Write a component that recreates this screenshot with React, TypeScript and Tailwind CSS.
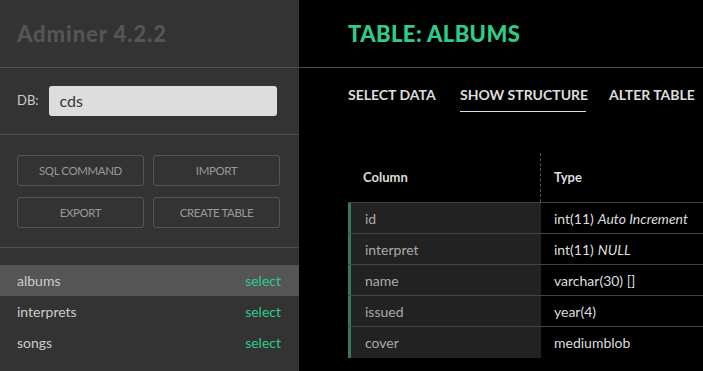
import React from "react";

const font = { fontFamily: "Lato, 'Noto Sans', sans-serif" };

const tables = ["albums", "interprets", "songs"];
const rows: { col: string; type: string; extra?: string }[] = [
  { col: "id", type: "int(11)", extra: "Auto Increment" },
  { col: "interpret", type: "int(11)", extra: "NULL" },
  { col: "name", type: "varchar(30) []" },
  { col: "issued", type: "year(4)" },
  { col: "cover", type: "mediumblob" },
];

export default function App() {
  return (
    <div className="flex h-[371px] w-[703px] overflow-hidden bg-black" style={font}>
      {/* Sidebar */}
      <div className="flex w-[299px] shrink-0 flex-col bg-[#333333]">
        <div className="flex h-[68px] items-center border-b border-[#4d4d4d] pl-[17px]">
          <span className="text-[22px] font-black tracking-[0.9px] text-[#555555]">Adminer 4.2.2</span>
        </div>
        <div className="flex h-[67px] items-center border-b border-[#4d4d4d] pl-[17px]">
          <span className="text-[13px] text-[#cccccc]">DB:</span>
          <div className="ml-[10px] flex h-[30px] w-[228px] items-center rounded-[3px] bg-[#dddddd] pl-[11px] text-[16px] text-[#333333]">
            cds
          </div>
        </div>
        <div className="grid grid-cols-[127px_127px] gap-x-[9px] gap-y-[11px] border-b border-[#4d4d4d] px-[17px] pb-[19px] pt-[20px]">
          {["SQL COMMAND", "IMPORT", "EXPORT", "CREATE TABLE"].map((b) => (
            <div
              key={b}
              className="flex h-[31px] items-center justify-center whitespace-nowrap rounded-[3px] border border-[#555555] text-[11.5px] tracking-[-0.4px] text-[#999999]"
            >
              {b}
            </div>
          ))}
        </div>
        <div className="pt-[17px]">
          {tables.map((t, i) => (
            <div
              key={t}
              className={`flex h-[31px] items-center justify-between pl-[17px] pr-[18px] text-[14px] ${
                i === 0 ? "bg-[#555555]" : ""
              }`}
            >
              <span className="text-[#cccccc]">{t}</span>
              <span className="text-[#2ecc8a]">select</span>
            </div>
          ))}
        </div>
      </div>

      {/* Main */}
      <div className="flex min-w-0 flex-1 flex-col bg-black">
        <div className="flex h-[68px] items-center border-b border-[#4d4d4d] pl-[49px]">
          <span className="whitespace-nowrap text-[22px] font-black tracking-[0.4px] text-[#2ecc8a]">TABLE: ALBUMS</span>
        </div>
        <div className="flex gap-[23px] pl-[49px] pt-[17px]">
          {[
            { t: "SELECT DATA", w: "w-[89px]", a: false },
            { t: "SHOW STRUCTURE", w: "w-[126px]", a: true },
            { t: "ALTER TABLE", w: "w-[88px]", a: false },
          ].map((tab) => (
            <div
              key={tab.t}
              className={`${tab.w} shrink-0 whitespace-nowrap border-b pb-[6px] text-[14px] font-bold leading-[20px] text-[#dddddd] ${
                tab.a ? "border-[#dddddd]" : "border-transparent"
              }`}
            >
              {tab.t}
            </div>
          ))}
        </div>

        <div className="ml-[49px] mt-[41px] w-[360px]">
          <div className="flex h-[50px] border-b border-[#444444]">
            <div className="flex w-[193px] shrink-0 items-center border-r border-dashed border-[#555555] pl-[15px] text-[13px] font-bold text-[#dddddd]">
              Column
            </div>
            <div className="flex flex-1 items-center pl-[13px] text-[13px] font-bold text-[#dddddd]">Type</div>
          </div>
          {rows.map((r, i) => (
            <div
              key={r.col}
              className={`flex h-[31px] ${i < rows.length - 1 ? "border-b border-[#444444]" : ""}`}
            >
              <div className="flex w-[193px] shrink-0 items-center border-l-[3px] border-[#357a5c] bg-[#222222] pl-[14px] text-[14px] text-[#aaaaaa]">
                {r.col}
              </div>
              <div className="flex flex-1 items-center whitespace-nowrap pl-[13px] text-[14px] text-[#dddddd]">
                <span>
                  {r.type}
                  {r.extra && <i className="ml-[4px]">{r.extra}</i>}
                </span>
              </div>
            </div>
          ))}
        </div>
      </div>
    </div>
  );
}
